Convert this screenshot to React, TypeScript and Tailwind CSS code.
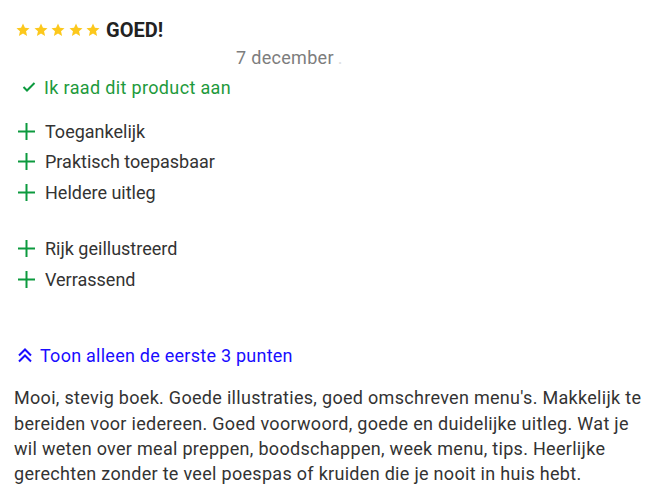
import React from "react";

const Star = () => (
  <svg width="14" height="14" viewBox="0 0 24 24" className="shrink-0">
    <path fill="#fcc81c" d="M12 1l3.3 7.2 7.9.8-6 5.3 1.8 7.8L12 18.1l-7 4 1.8-7.8-6-5.3 7.9-.8z" />
  </svg>
);

const Plus = () => (
  <svg width="17" height="17" viewBox="0 0 17 17" className="shrink-0 ml-[2px]">
    <path d="M8.5 0v17M0 8.5h17" stroke="#0c9a3e" strokeWidth="2" />
  </svg>
);

const items1 = ["Toegankelijk", "Praktisch toepasbaar", "Heldere uitleg"];
const items2 = ["Rijk geillustreerd", "Verrassend"];

export default function App() {
  return (
    <div
      className="w-[647px] h-[504px] bg-white text-[#333333] overflow-hidden"
      style={{ fontFamily: "Roboto, 'Liberation Sans', sans-serif" }}
    >
      <div className="pl-[16px] pt-[18px]">
        <div className="flex items-center h-[24px]">
          <div className="flex gap-[3.5px]">
            <Star />
            <Star />
            <Star />
            <Star />
            <Star />
          </div>
          <span className="ml-[6px] text-[20px] font-bold text-[#222] leading-none">GOED!</span>
        </div>
        <div className="pl-[220px] mt-[3px] h-[24px] flex items-center text-[18px] text-[#7d7d7d] tracking-[0.3px]">
          7 december<span className="text-[#e0e0e0] ml-[4px]">.</span>
        </div>
        <div className="flex items-center mt-[6px] h-[24px]">
          <svg width="14" height="12" viewBox="0 0 14 12" className="ml-[6px] shrink-0">
            <path d="M1.5 6l3.5 3.5L12.5 2" stroke="#0c9a3e" strokeWidth="2" fill="none" />
          </svg>
          <span className="ml-[8px] text-[18px] text-[#1e9a3c] tracking-[0.35px]">Ik raad dit product aan</span>
        </div>
        <div className="mt-[17px] flex flex-col">
          {items1.map((t) => (
            <div key={t} className="flex items-center h-[30.5px]">
              <Plus />
              <span className="ml-[10px] text-[18px]">{t}</span>
            </div>
          ))}
        </div>
        <div className="mt-[26px] flex flex-col">
          {items2.map((t) => (
            <div key={t} className="flex items-center h-[30.5px]">
              <Plus />
              <span className="ml-[10px] text-[18px]">{t}</span>
            </div>
          ))}
        </div>
        <div className="mt-[48.5px] flex items-center h-[24px] text-[#1a0dff]">
          <svg width="18" height="18" viewBox="0 0 18 18" className="shrink-0">
            <path d="M3 9.5l6-6 6 6M3 15.5l6-6 6 6" stroke="#1a0dff" strokeWidth="2" fill="none" />
          </svg>
          <span className="ml-[6px] text-[18px] tracking-[0.25px]">Toon alleen de eerste 3 punten</span>
        </div>
      </div>
      <p className="mt-[18.3px] pl-[14px] pr-[0px] text-[18px] leading-[25.3px] tracking-[0.3px] text-[#333]">
        Mooi, stevig boek. Goede illustraties, goed omschreven menu's. Makkelijk te bereiden voor iedereen. Goed
        voorwoord, goede en duidelijke uitleg. Wat je wil weten over meal preppen, boodschappen, week menu, tips.
        Heerlijke gerechten zonder te veel poespas of kruiden die je nooit in huis hebt.
      </p>
    </div>
  );
}
